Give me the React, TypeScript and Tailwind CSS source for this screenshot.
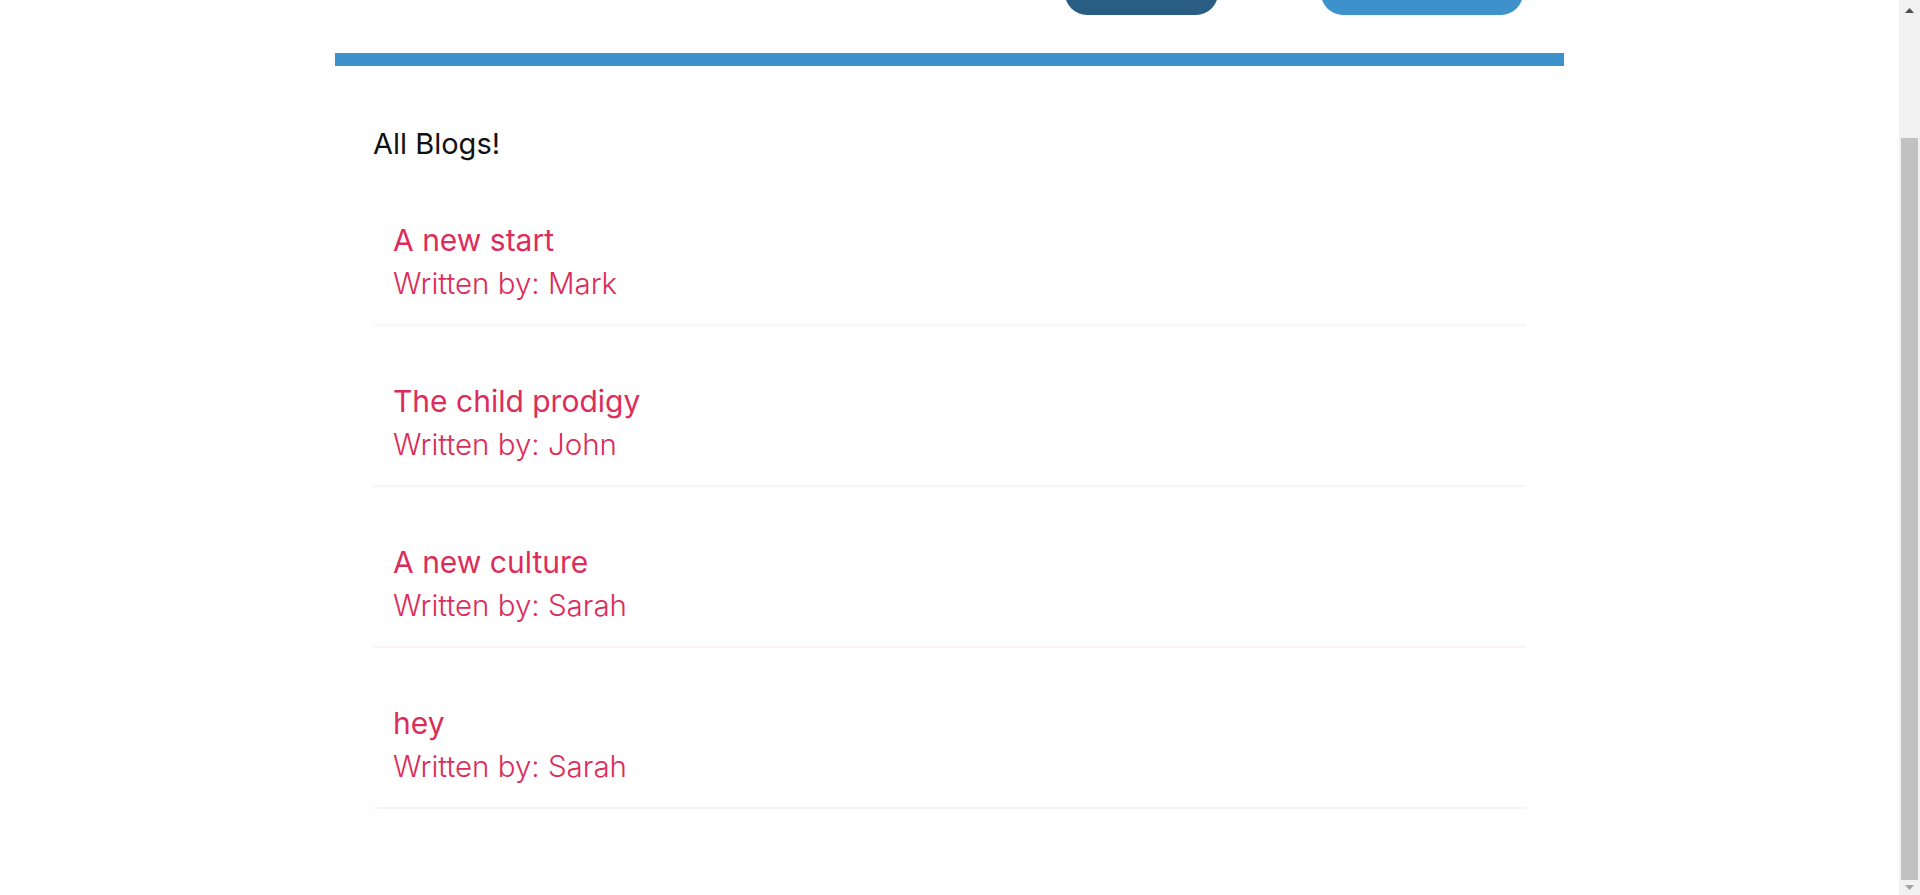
import React from 'react'

type Blog = {
  id: number;
  title: string;
  author: string;
}

const blogs: Blog[] = [
  { id: 1, title: 'A new start', author: 'Mark' },
  { id: 2, title: 'The child prodigy', author: 'John' },
  { id: 3, title: 'A new culture', author: 'Sarah' },
  { id: 4, title: 'hey', author: 'Sarah' },
]

function BlogPreview({ blog }: { blog: Blog }) {
  return (
    <div className="px-[20px] pt-[20px] pb-[21px] mb-[35px] border-b-2 border-[#fdf2f7]">
      <h2 className="text-[30px] leading-[40px] font-normal text-[#dc2d5a]">{blog.title}</h2>
      <p className="mt-[3px] text-[29.5px] leading-[40px] font-light text-[#dc2d5a]">Written by: {blog.author}</p>
    </div>
  )
}

function FakeScrollbar() {
  return (
    <div className="flex w-[21px] shrink-0 flex-col bg-[#f1f1f1]">
      <div className="flex h-[21px] items-start justify-center pt-[8px]">
        <svg width="9" height="5" viewBox="0 0 9 5">
          <polygon points="4.5,0 9,5 0,5" fill="#505050" />
        </svg>
      </div>
      <div className="h-[117px]" />
      <div className="mx-[2px] h-[742px] bg-[#c1c1c1]" />
      <div className="flex flex-1 items-center justify-center">
        <svg width="9" height="5" viewBox="0 0 9 5">
          <polygon points="0,0 9,0 4.5,5" fill="#a3a3a3" />
        </svg>
      </div>
    </div>
  )
}

export default function App() {
  return (
    <div className="flex h-[895px] w-full overflow-hidden bg-white" style={{ fontFamily: 'Inter, "Noto Sans", sans-serif' }}>
      <div className="min-w-0 flex-1">
        <div className="mx-auto w-[1229px]">
          {/* navbar, scrolled mostly out of view */}
          <nav className="flex h-[15px] items-end justify-end gap-[103px] pr-[41px]">
            <div className="h-[44px] w-[153px] shrink-0 rounded-[22px] bg-[#2a5d84]" />
            <div className="h-[44px] w-[202px] shrink-0 rounded-[22px] bg-[#3d92cc]" />
          </nav>
          <div className="mt-[38px] h-[13px] bg-[#3d92cc]" />

          <div className="px-[38px] pt-[60px]">
            <h2 className="mb-[38px] text-[29px] leading-[36px] font-normal text-[#111111]">All Blogs!</h2>
            {blogs.map((blog) => (
              <BlogPreview key={blog.id} blog={blog} />
            ))}
          </div>
        </div>
      </div>
      <FakeScrollbar />
    </div>
  )
}
